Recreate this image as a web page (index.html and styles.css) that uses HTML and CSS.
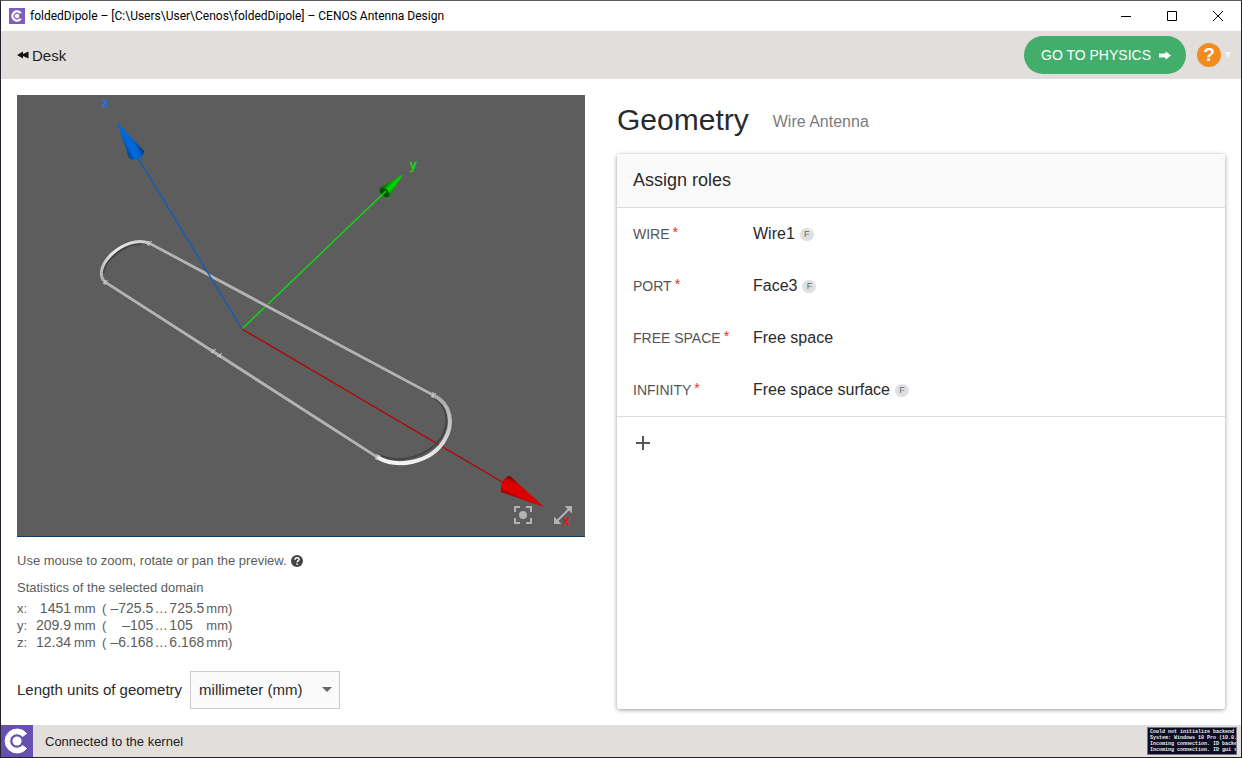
FILE: index.html
```html
<!DOCTYPE html>
<html lang="en">
<head>
<meta charset="utf-8">
<title>foldedDipole – CENOS Antenna Design</title>
<link rel="stylesheet" href="styles.css">
</head>
<body>
<div class="window">
  <header class="titlebar">
    <svg class="app-icon" viewBox="0 0 32 32" aria-hidden="true"><rect width="32" height="32" fill="#7a5fbd"/><path d="M25.500 9.300A11.600 11.600 0 1 0 25.500 22.700L21.700 20A7 7 0 1 1 21.700 12Z" fill="#fff"/><circle cx="16" cy="16" r="4.600" fill="#fff"/></svg>
    <span class="window-title">foldedDipole – [C:\Users\User\Cenos\foldedDipole] – CENOS Antenna Design</span>
    <div class="window-controls">
      <button type="button" aria-label="Minimize"><svg viewBox="0 0 12 12"><path d="M1 6.500h10"/></svg></button>
      <button type="button" aria-label="Maximize"><svg viewBox="0 0 12 12"><path d="M1.500 1.500h9v9h-9z"/></svg></button>
      <button type="button" aria-label="Close"><svg viewBox="0 0 12 12"><path d="M1 1l10 10M11 1L1 11"/></svg></button>
    </div>
  </header>

  <nav class="toolbar">
    <a class="desk-link" href="#desk"><svg viewBox="0 0 12 8" aria-hidden="true"><path d="M0 4L6 .5V3L11.500 .5v7L6 5v2.500z"/></svg>Desk</a>
    <button type="button" class="next-button">GO TO PHYSICS<svg viewBox="0 0 12 9" aria-hidden="true"><path d="M0 2.500h6.500V.2L12 4.500 6.500 8.800V6.500H0z"/></svg></button>
    <button type="button" class="help-button" aria-label="Help"><span class="help-mark">?</span><svg viewBox="0 0 6 6" aria-hidden="true"><path d="M0 0h6L3 6z"/></svg></button>
  </nav>

  <main class="content">
    <section class="model">
      <div class="preview">
        <svg class="scene" viewBox="0 0 568 441" preserveAspectRatio="xMidYMid meet" role="img" aria-label="Folded dipole preview">
          <defs>
            <linearGradient id="coneZ" gradientUnits="userSpaceOnUse" x1="108" y1="54" x2="122" y2="47"><stop offset="0" stop-color="#00468f"/><stop offset=".3" stop-color="#0069da"/><stop offset=".7" stop-color="#0065d2"/><stop offset="1" stop-color="#00336e"/></linearGradient>
            <linearGradient id="coneY" gradientUnits="userSpaceOnUse" x1="368" y1="88" x2="378" y2="98"><stop offset="0" stop-color="#005c00"/><stop offset=".5" stop-color="#00dc00"/><stop offset="1" stop-color="#006a00"/></linearGradient>
            <linearGradient id="coneX" gradientUnits="userSpaceOnUse" x1="503" y1="385" x2="495" y2="402"><stop offset="0" stop-color="#600"/><stop offset=".3" stop-color="#d40000"/><stop offset=".75" stop-color="#e00000"/><stop offset="1" stop-color="#900"/></linearGradient>
            <linearGradient id="bendLeft" gradientUnits="userSpaceOnUse" x1="84" y1="187" x2="132" y2="148"><stop offset="0" stop-color="#aaa"/><stop offset=".5" stop-color="#eee"/><stop offset="1" stop-color="#ccc"/></linearGradient>
            <linearGradient id="bendRight" gradientUnits="userSpaceOnUse" x1="400" y1="300" x2="400" y2="368"><stop offset="0" stop-color="#aaa"/><stop offset=".5" stop-color="#c8c8c8"/><stop offset="1" stop-color="#f4f4f4"/></linearGradient>
          </defs>
          <path class="axis axis-y" d="M225 234L368 97"/>
          <path class="axis axis-x" d="M225 234L487 388"/>
          <g fill="none" stroke-width="3">
            <path stroke="#505050" stroke-width="4" d="M132 148L416 300M88 187L360 362"/>
            <path stroke="#444" stroke-width="2" d="M87 178C86 167 106 149 124 149M417 303C432 311 432 330 424 343C411 361 383 370 362 360"/>
            <path stroke="#b2b2b2" d="M132 148L416 300M88 187L360 362"/>
            <path stroke="url(#bendLeft)" d="M88 187C73 173 107 139 132 148"/>
            <path stroke="url(#bendRight)" stroke-width="4" d="M416 300C435 309 437 330 427 346C413 368 380 374 360 362"/>
            <path stroke="#ccc" stroke-width="1" d="M130 150l5-4M132 146v5M86 189l5-4M88 185v5M194 258l5-4M200 262l5-4M196 254v4M203 259v4M414 302l5-4M416 297v6M358 364l5-4M360 359v6"/>
          </g>
          <path class="axis axis-z" d="M225 234L121 63"/>
          <path fill="url(#coneZ)" d="M100 27L112 63Q115 66 121 64Q127 61 127 56Z"/>
          <path fill="url(#coneY)" d="M386 79L363 93Q361 98 365 101Q370 104 373 101Z"/>
          <ellipse cx="367.500" cy="97.500" rx="5.500" ry="3.600" transform="rotate(43 367.500 97.500)" fill="#005000"/>
          <path class="axis axis-y" d="M364 101L369 96"/>
          <path fill="url(#coneX)" d="M527 412L493 381Q489 381 486 386Q483 391 484 397Z"/>
          <text class="axis-label" x="85" y="12" fill="#0a7bf5" stroke="#0a7bf5">z</text>
          <text class="axis-label" x="393" y="74" fill="#0be00b" stroke="#0be00b">y</text>
          <text class="axis-label" x="546" y="430" fill="#f01010" stroke="#f01010">x</text>
        </svg>
        <div class="preview-tools">
          <button type="button" aria-label="Fit to view"><svg viewBox="0 0 18 18"><path d="M1 6V1h5M12 1h5v5M17 12v5h-5M6 17H1v-5" fill="none" stroke="#b2b2b2" stroke-width="2"/><circle cx="9" cy="9" r="4" fill="#b2b2b2"/></svg></button>
          <button type="button" aria-label="Expand preview"><svg viewBox="0 0 18 18"><path d="M3 15L15 3" stroke="#b2b2b2" stroke-width="2"/><path d="M10.500 0H18v7.500zM0 10.500V18h7.500z" fill="#b2b2b2"/></svg></button>
        </div>
      </div>
      <p class="hint">Use mouse to zoom, rotate or pan the preview. <svg viewBox="0 0 12 12" aria-hidden="true"><circle cx="6" cy="6" r="6" fill="#444"/><path d="M4 4.700C4 2 8.100 2.200 8.100 4.500C8.100 5.900 6.100 5.900 6.100 7.200" fill="none" stroke="#fff" stroke-width="1.500"/><circle cx="6.100" cy="9.100" r=".9" fill="#fff"/></svg></p>
      <h2 class="stats-title">Statistics of the selected domain</h2>
      <table class="stats">
        <tr><th scope="row">x:</th><td class="size">1451</td><td class="unit">mm</td><td class="open">(</td><td class="from">–725.5</td><td class="dots">…</td><td class="to">725.5</td><td>mm)</td></tr>
        <tr><th scope="row">y:</th><td class="size">209.9</td><td class="unit">mm</td><td class="open">(</td><td class="from">–105</td><td class="dots">…</td><td class="to">105</td><td>mm)</td></tr>
        <tr><th scope="row">z:</th><td class="size">12.34</td><td class="unit">mm</td><td class="open">(</td><td class="from">–6.168</td><td class="dots">…</td><td class="to">6.168</td><td>mm)</td></tr>
      </table>
      <div class="units">
        <label for="units">Length units of geometry</label>
        <div class="select-box">
          <select id="units"><option>millimeter (mm)</option><option>meter (m)</option></select>
          <svg viewBox="0 0 10 5" aria-hidden="true"><path d="M0 0h10L5 5z"/></svg>
        </div>
      </div>
    </section>

    <section class="geometry">
      <div class="heading"><h1>Geometry</h1><span class="subtitle">Wire Antenna</span></div>
      <div class="card">
        <h2 class="card-title">Assign roles</h2>
        <dl class="roles">
          <div class="role"><dt>WIRE<span class="required">*</span></dt><dd>Wire1<span class="badge">F</span></dd></div>
          <div class="role"><dt>PORT<span class="required">*</span></dt><dd>Face3<span class="badge">F</span></dd></div>
          <div class="role"><dt>FREE SPACE<span class="required">*</span></dt><dd>Free space</dd></div>
          <div class="role"><dt>INFINITY<span class="required">*</span></dt><dd>Free space surface<span class="badge">F</span></dd></div>
        </dl>
        <button type="button" class="add-button" aria-label="Add role"><svg viewBox="0 0 14 14"><path d="M7 0v14M0 7h14"/></svg></button>
      </div>
    </section>
  </main>

  <footer class="statusbar">
    <svg class="logo" viewBox="0 0 32 32" aria-hidden="true"><rect width="32" height="32" fill="#6650b0"/><path d="M25.500 8.500A12 12 0 1 0 25.500 23.500L21.500 20.500A7.200 7.200 0 1 1 21.500 11.500Z" fill="#fff" stroke="#fff"/><circle cx="16" cy="16" r="4.600" fill="#fff"/></svg>
    <span class="status-text">Connected to the kernel</span>
    <pre class="console">Could not initialize backend
System: Windows 10 Pro (10.0.
Incoming connection. ID backe
Incoming connection. ID gui s</pre>
  </footer>
</div>
</body>
</html>
```

FILE: styles.css
```css
* { box-sizing: border-box; }

body {
  margin: 0;
  font-family: "Liberation Sans", Arial, sans-serif;
  font-size: 16px;
  color: #2a2a2a;
  background: #fff;
}

button {
  margin: 0;
  padding: 0;
  border: 0;
  background: none;
  font: inherit;
  color: inherit;
}

svg { display: block; }

h1, h2, p, dl, dd, pre { margin: 0; font-weight: normal; }

.window {
  display: flex;
  flex-direction: column;
  min-height: 100vh;
  border: 1px solid #25222d;
  border-top-color: #5f5d5f;
}

.titlebar {
  display: flex;
  align-items: center;
  height: 30px;
  padding-left: 8px;
  gap: 5px;
}
.app-icon { width: 16px; height: 16px; }
.window-title {
  font-family: Roboto, "Open Sans", sans-serif;
  font-size: 12px;
  color: #000;
}
.window-controls { display: flex; margin-left: auto; }
.window-controls button {
  display: grid;
  place-items: center;
  width: 46px;
  height: 28px;
}
.window-controls svg {
  width: 12px;
  height: 12px;
  fill: none;
  stroke: #000;
}

.toolbar {
  display: flex;
  align-items: center;
  height: 48px;
  padding: 0 10px 0 16px;
  background: #e1dedb;
}
.desk-link {
  display: flex;
  align-items: center;
  gap: 3px;
  color: #222;
  font-size: 15px;
  text-decoration: none;
}
.desk-link svg { width: 12px; height: 8px; fill: #111; }
.next-button {
  display: flex;
  align-items: center;
  gap: 8px;
  height: 38px;
  margin-left: auto;
  padding: 0 15px 0 17px;
  border-radius: 19px;
  background: #43ad6b;
  color: #fff;
  font-size: 14px;
}
.next-button svg { width: 12px; height: 9px; fill: #fff; }
.help-button {
  display: flex;
  align-items: center;
  gap: 4px;
  margin-left: 11px;
}
.help-mark {
  width: 24px;
  height: 24px;
  border-radius: 50%;
  background: #f28c22;
  color: #fff;
  font-size: 19px;
  font-weight: bold;
  line-height: 24px;
  text-align: center;
}
.help-button svg { width: 6px; height: 6px; fill: #f5f5f5; }

.content {
  display: grid;
  grid-template-columns: 71fr 76fr;
  gap: 32px;
  flex: 1;
  padding: 16px;
}

.model { display: flex; flex-direction: column; min-width: 0; }
.preview {
  position: relative;
  display: flex;
  flex: 1;
  min-height: 240px;
  background: #5d5d5d;
  border-bottom: 1px solid #0d3a66;
}
.scene { flex: 1; width: 100%; min-width: 0; }
.axis { fill: none; stroke-width: 1.4; }
.axis-x { stroke: #b90000; }
.axis-y { stroke: #0bdc0b; }
.axis-z { stroke: #0a5fbd; }
.axis-label {
  font-family: "Liberation Sans", Arial, sans-serif;
  font-size: 13px;
  stroke-width: .4;
}
.preview-tools {
  position: absolute;
  right: 13px;
  bottom: 12px;
  display: flex;
  gap: 22px;
}
.preview-tools svg { width: 18px; height: 18px; }

.hint {
  display: flex;
  align-items: center;
  gap: 4px;
  margin-top: 14px;
  font-size: 13px;
  line-height: 20px;
  color: #5c5c5c;
}
.hint svg { width: 12px; height: 12px; }
.stats-title {
  margin: 7px 0 2px;
  font-size: 13px;
  line-height: 20px;
  color: #5c5c5c;
}
.stats {
  align-self: flex-start;
  border-collapse: collapse;
  font-size: 13px;
  line-height: 17px;
  color: #5c5c5c;
}
.stats th, .stats td { padding: 0; font-weight: normal; text-align: left; height: 17px; }
.stats th { width: 14px; }
.stats .size { width: 40px; font-size: 14px; text-align: right; }
.stats .unit { padding-left: 3px; width: 31px; }
.stats .from { width: 47px; font-size: 14px; text-align: right; }
.stats .dots { width: 16px; text-align: center; }
.stats .to { width: 37px; font-size: 14px; }

.units {
  display: flex;
  align-items: center;
  gap: 8px;
  margin-top: 20px;
  font-size: 15px;
}
.units label { padding-bottom: 1px; }
.select-box { position: relative; width: 150px; }
.select-box select {
  appearance: none;
  width: 100%;
  height: 38px;
  padding: 0 24px 2px 8px;
  border: 1px solid #ccc;
  border-radius: 0;
  background: #fafafa;
  color: #2a2a2a;
  font: inherit;
}
.select-box svg {
  position: absolute;
  top: 16px;
  right: 8px;
  width: 10px;
  height: 5px;
  fill: #666;
  pointer-events: none;
}

.geometry { display: flex; flex-direction: column; min-width: 0; }
.heading {
  display: flex;
  align-items: center;
  gap: 24px;
  height: 59px;
  padding-bottom: 9px;
}
.heading h1 { font-size: 30px; line-height: 50px; }
.subtitle { padding-top: 4px; color: #7c7c7c; }
.card {
  flex: 1;
  border-radius: 3px;
  box-shadow: 0 1px 4px rgba(0, 0, 0, .4);
}
.card-title {
  padding: 0 16px;
  border-bottom: 1px solid #dcdcdc;
  border-radius: 3px 3px 0 0;
  background: #fafafa;
  font-size: 18px;
  line-height: 53px;
}
.roles { border-bottom: 1px solid #dcdcdc; }
.role {
  display: grid;
  grid-template-columns: 120px 1fr;
  align-items: center;
  height: 52px;
  padding: 0 16px;
}
.role dt { padding-bottom: 2px; font-size: 14px; color: #555; }
.required {
  padding-left: 3px;
  color: #f22;
  vertical-align: 2px;
}
.role dd { display: flex; align-items: center; gap: 5px; }
.badge {
  width: 14px;
  border-radius: 7px;
  background: #e0e0e0;
  color: #666;
  font-size: 9px;
  line-height: 13px;
  text-align: center;
}
.add-button {
  display: grid;
  place-items: center;
  width: 52px;
  height: 52px;
}
.add-button svg { width: 14px; height: 14px; stroke: #555; stroke-width: 2; }

.statusbar {
  display: flex;
  align-items: center;
  height: 32px;
  padding-right: 4px;
  background: #e1dedb;
}
.logo { width: 32px; height: 32px; }
.status-text { margin-left: 12px; font-size: 13px; color: #222; }
.console {
  width: 90px;
  height: 28px;
  margin-left: auto;
  padding: 1px 2px;
  overflow: hidden;
  border: 1px solid #777;
  background: #0c0c24;
  color: #eee;
  font-family: "Liberation Mono", monospace;
  font-size: 5px;
  font-weight: bold;
  line-height: 6px;
}
```
